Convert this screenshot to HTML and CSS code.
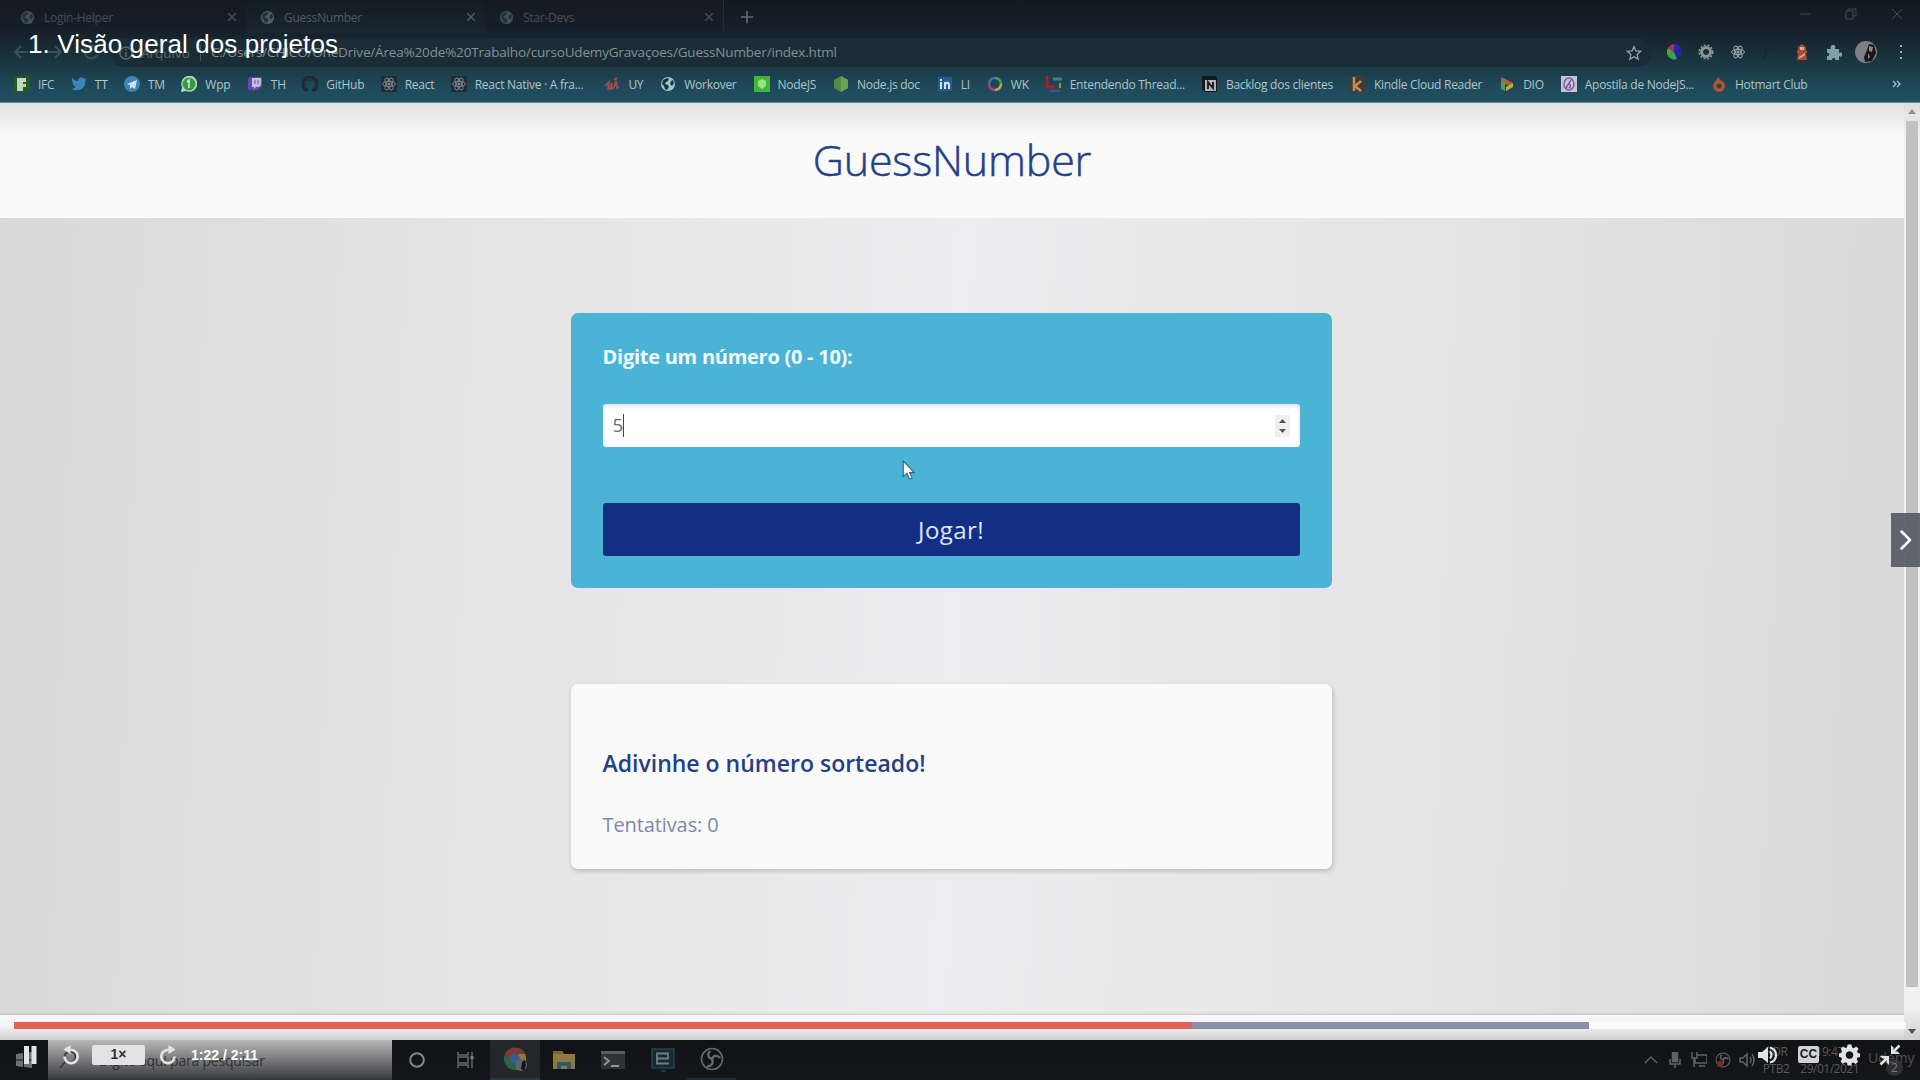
FILE: index.html
```html
<!DOCTYPE html>
<html lang="pt-BR">
<head>
<meta charset="utf-8">
<title>GuessNumber</title>
<link rel="stylesheet" href="styles.css">
</head>
<body>
<svg class="defs" aria-hidden="true">
  <symbol id="globe" viewBox="0 0 16 16"><circle cx="8" cy="8" r="7" fill="currentColor"/><path d="M3 4l4-2 2 1-1 2-2 1-1 2 3 1 1 2-2 3-2-1-1-3-2-2zM11 5l2-1 1 3-2 3-2-2z" fill="#18363f"/></symbol>
  <symbol id="atom" viewBox="0 0 16 16"><g fill="none" stroke="currentColor"><ellipse cx="8" cy="8" rx="6.5" ry="2.6"/><ellipse cx="8" cy="8" rx="6.5" ry="2.6" transform="rotate(60 8 8)"/><ellipse cx="8" cy="8" rx="6.5" ry="2.6" transform="rotate(120 8 8)"/></g><circle cx="8" cy="8" r="1.5" fill="currentColor"/></symbol>
  <symbol id="obs" viewBox="0 0 24 24"><g fill="none" stroke="currentColor" stroke-width="1.6"><circle cx="12" cy="12" r="10.5"/><path d="M12 12c-4-1-5-5-2-8M12 12c1-4 6-4 8-1M12 12c2 4-1 8-5 7" stroke-width="2.4"/></g></symbol>
</svg>
<div class="screen">
  <header class="browser">
    <div class="tabs">
      <div class="tab"><svg class="i16"><use href="#globe"/></svg><span class="tab-name">Login-Helper</span><svg class="x" viewBox="0 0 8 8"><path d="M0 0l8 8M8 0L0 8"/></svg></div>
      <div class="tab active"><svg class="i16"><use href="#globe"/></svg><span class="tab-name">GuessNumber</span><svg class="x" viewBox="0 0 8 8"><path d="M0 0l8 8M8 0L0 8"/></svg></div>
      <div class="tab"><svg class="i16"><use href="#globe"/></svg><span class="tab-name">Star-Devs</span><svg class="x" viewBox="0 0 8 8"><path d="M0 0l8 8M8 0L0 8"/></svg></div>
      <svg class="plus" viewBox="0 0 12 12"><path d="M6 0v12M0 6h12"/></svg>
      <div class="window-buttons">
        <svg viewBox="0 0 12 12"><path d="M1 6h10"/></svg>
        <svg viewBox="0 0 12 12"><path d="M1 3h7v8H1zM3 3V1h8v7H8"/></svg>
        <svg viewBox="0 0 12 12"><path d="M1 1l10 10M11 1L1 11"/></svg>
      </div>
    </div>
    <div class="toolbar">
      <svg class="nav" viewBox="0 0 84 16"><path d="M14 8H2M7 2L1 8l6 6M34 8h12M41 2l6 6-6 6M83 5a6.500 6.500 0 1 0 0 6"/></svg>
      <div class="omnibox">
        <svg class="i14" viewBox="0 0 14 14"><circle cx="7" cy="7" r="6" fill="none" stroke="currentColor" stroke-width="1.500"/><path d="M7 6v5M7 3v1.500" stroke="currentColor" stroke-width="1.500"/></svg>
        <span class="scheme">Arquivo</span><i></i>
        <span class="url">C:/Users/CHICO/OneDrive/Área%20de%20Trabalho/cursoUdemyGravaçoes/GuessNumber/index.html</span>
        <svg class="star" viewBox="0 0 16 16"><path d="M8 1.500l1.900 4.400 4.800.4-3.600 3.200 1.100 4.700L8 11.700l-4.200 2.500 1.100-4.700L1.300 6.300l4.800-.4z"/></svg>
      </div>
      <div class="extensions">
        <svg viewBox="0 0 16 16"><path d="M8 8V0a8 8 0 0 1 7 4z" fill="#3127a6"/><path d="M8 8l7-4a8 8 0 0 1-4 11z" fill="#2720a0"/><path d="M8 8l3 7a8 8 0 0 1-9-3z" fill="#38a44a"/><path d="M8 8l-6 4a8 8 0 0 1 0-8z" fill="#52a442"/><path d="M8 8L2 4a8 8 0 0 1 6-4z" fill="#a83548"/></svg>
        <svg viewBox="0 0 16 16"><circle cx="8" cy="8" r="4.500" fill="none" stroke="#8f9698" stroke-width="3"/><circle cx="8" cy="8" r="6.800" fill="none" stroke="#8f9698" stroke-width="1.500" stroke-dasharray="2 1.700"/></svg>
        <svg class="atom-ext"><use href="#atom"/></svg>
        <svg viewBox="0 0 16 16"><path d="M7 1c-3 0-2 3-3 7s-1 6-3 6M2 6h6M10 4c0-4 5-3 4 0-1 2-3 2-3 5M11 12v1" fill="none" stroke="#122a34" stroke-width="1.500"/></svg>
        <svg viewBox="0 0 16 16"><path d="M4 6V3l4-3 4 3v3l1 1v2h-1l1 7H3l1-7H3V7z" fill="#ab4c32"/><path d="M6 3h4v3H6zM5 13l6-4v2l-6 4z" fill="#c7b4a8"/></svg>
        <svg viewBox="0 0 16 16"><path d="M1 5h4c-1-3 0-4 2-4s3 1 2 4h4v4c3-1 3 0 3 2s-1 2-3 1v4H9c1-3-3-3-3 0H1v-4c3 1 3-4 0-3z" fill="#7da3a7"/></svg>
        <svg class="avatar" viewBox="0 0 22 22"><circle cx="11" cy="11" r="11" fill="#7c8085"/><path d="M12 9l2-6 5 1 2 8-4 8-7 1-1-5z" fill="#14171b"/><path d="M14 5l4 1-1 5-3-1zM13 12l2 4-2 2z" fill="#a3807a"/></svg>
        <svg class="kebab" viewBox="0 0 4 16"><path d="M1 1h2v2H1zM1 7h2v2H1zM1 13h2v2H1z"/></svg>
      </div>
    </div>
    <nav class="bookmarks">
      <a><svg viewBox="0 0 16 16"><path d="M0 0h16v16H0z" fill="#24591f"/><path d="M3 2h9v4H9v2h3v3H9v4H3z" fill="#c5d3c0"/></svg><span>IFC</span></a>
      <a><svg viewBox="0 0 16 16"><path d="M1 2c2 2 4 3 6 3 0-3 4-5 6-2l2-1-1 5c0 6-7 9-13 6l4-2C2 10 1 6 1 2z" fill="#3b86bd"/></svg><span>TT</span></a>
      <a><svg viewBox="0 0 16 16"><circle cx="8" cy="8" r="8" fill="#3b85b8"/><path d="M3 8l10-4-2 9-3-2-2 2V9z" fill="#d6e3e8"/></svg><span>TM</span></a>
      <a><svg viewBox="0 0 16 16"><path d="M0 16l1-5a8 8 0 1 1 4 4z" fill="#b8d5bd"/><circle cx="8" cy="8" r="6.500" fill="#349b49"/><path d="M6 6l2-2v8" stroke="#dce9e0" stroke-width="1.500" fill="none"/></svg><span>Wpp</span></a>
      <a><svg viewBox="0 0 16 16"><path d="M2 1h13v9l-4 4H8l-2 2v-2H1V4z" fill="#6447af"/><path d="M5 2h9v7l-2 2H9l-2 2v-2H5z" fill="#c6bddf"/><path d="M8 4v4M11 4v4" stroke="#6447af"/></svg><span>TH</span></a>
      <a><svg viewBox="0 0 16 16"><path d="M5.500 15v-3C2 11 2 6 3.500 5V2.500L6 4h4l2.500-1.500V5c1.500 1 1.500 6-2 7v3" fill="none" stroke="#202a32"/><path d="M5 15a7.300 7.300 0 1 1 6 0" fill="none" stroke="#202a32" stroke-width="2.600"/></svg><span>GitHub</span></a>
      <a><svg class="react"><use href="#atom"/></svg><span>React</span></a>
      <a class="wide"><svg class="react"><use href="#atom"/></svg><span>React Native · A fra...</span></a>
      <a><svg viewBox="0 0 16 16"><path d="M1 10l4-4-1 7c2 1 3-3 4-6l-1 6c3 0 4-4 5-8l1 7 2-1M10 4l3-2" fill="none" stroke="#a04b4e" stroke-width="1.800"/></svg><span>UY</span></a>
      <a><svg class="pale"><use href="#globe"/></svg><span>Workover</span></a>
      <a><svg viewBox="0 0 16 16"><path d="M0 0h16v16H0z" fill="#44b637"/><path d="M8 3l4 2v5l-4 3-4-3V5z" fill="#9be086"/></svg><span>NodeJS</span></a>
      <a><svg viewBox="0 0 16 16"><path d="M8 0l7 4v8l-7 4-7-4V4z" fill="#548948"/><path d="M8 0l7 4v8l-7 4z" fill="#6aa153"/></svg><span>Node.js doc</span></a>
      <a><svg viewBox="0 0 16 16"><path d="M1 1h14v14H1z" fill="#235f95"/><path d="M4 6v7M4 3v2M8 13V6M8 9c1-3 4-3 4 0v4" fill="none" stroke="#d4e1e9" stroke-width="2"/></svg><span>LI</span></a>
      <a><svg viewBox="0 0 16 16"><g fill="none" stroke-width="2.500"><path d="M8 2a6 6 0 0 1 6 6" stroke="#44a24e"/><path d="M14 8a6 6 0 0 1-6 6" stroke="#c1a24b"/><path d="M8 14a6 6 0 0 1-6-6" stroke="#a84262"/><path d="M2 8a6 6 0 0 1 6-6" stroke="#4a6dad"/></g></svg><span>WK</span></a>
      <a><svg viewBox="0 0 16 16"><path d="M1 0v11h8" fill="none" stroke="#a3252c" stroke-width="3"/><path d="M7 3h9" stroke="#3f8674" stroke-width="3"/><path d="M14 7v5" stroke="#90964a" stroke-width="2"/><path d="M4 15h10" stroke="#265c8c" stroke-width="2"/></svg><span>Entendendo Thread...</span></a>
      <a><svg viewBox="0 0 16 16"><path d="M0 0h13l2 2v14H3l-3-3z" fill="#15191c"/><path d="M3 4h11v11H3z" fill="#aeb4b7"/><path d="M6 13V6l5 6V6" fill="none" stroke="#15191c" stroke-width="1.800"/></svg><span>Backlog dos clientes</span></a>
      <a><svg viewBox="0 0 16 16"><path d="M0 0h16v16H0z" fill="#3b3d3d"/><path d="M4 1v14M11 5l-6 5 6 5" fill="none" stroke="#c48c4e" stroke-width="2.500"/></svg><span>Kindle Cloud Reader</span></a>
      <a><svg viewBox="0 0 16 16"><path d="M2 1l12 6-2 3-10-3z" fill="#ad633d"/><path d="M2 5l4 2v8l-4-2z" fill="#589851"/><path d="M14 7v4l-7 4V11z" fill="#c0ac3d"/></svg><span>DIO</span></a>
      <a><svg viewBox="0 0 16 16"><path d="M0 0h16v16H0z" fill="#c4c6d1"/><ellipse cx="8" cy="8" rx="5" ry="6" fill="none" stroke="#815aa9" stroke-width="1.500"/><path d="M5 12l5-8M8 12c2-1 2-3 0-4" stroke="#815aa9" stroke-width="1.500" fill="none"/></svg><span>Apostila de NodeJS...</span></a>
      <a><svg viewBox="0 0 16 16"><path d="M7 1l2 3c3 1 5 3 5 6a6 6 0 0 1-12 0c0-3 3-4 5-9z" fill="#b4512f"/><circle cx="8" cy="10" r="2.500" fill="#204452"/></svg><span>Hotmart Club</span></a>
      <svg class="more" viewBox="0 0 9 8"><path d="M1 1l3 3-3 3M5 1l3 3-3 3"/></svg>
    </nav>
  </header>
  <div class="viewport">
    <main class="page">
      <h1>GuessNumber</h1>
      <section class="content">
        <form class="guess">
          <label>Digite um número (0 - 10):</label>
          <div class="field"><span>5</span><svg viewBox="0 0 15 22"><path d="M4 8l3.500-4L11 8zM4 14l3.500 4 3.500-4z"/></svg></div>
          <div class="play">Jogar!</div>
        </form>
        <section class="result">
          <h2>Adivinhe o número sorteado!</h2>
          <p>Tentativas: 0</p>
        </section>
      </section>
      <footer></footer>
    </main>
    <aside class="scrollbar"><svg viewBox="0 0 16 17"><path d="M4 11l4-5 4 5z" fill="#929292"/></svg><b></b><svg viewBox="0 0 16 17"><path d="M4 6l4 5 4-5z" fill="#4d4d4d"/></svg></aside>
  </div>
  <footer class="taskbar">
    <div class="start"><svg viewBox="0 0 16 16"><path d="M0 2l7-1v6.500H0zM8 1l8-1v7.500H8zM0 8.500h7V15l-7-1zM8 8.500h8V16l-8-1z"/></svg></div>
    <div class="search"><svg viewBox="0 0 18 20"><circle cx="11" cy="7" r="5.500"/><path d="M7 11l-6 7"/></svg><span>Digite aqui para pesquisar</span></div>
    <div class="app"><svg viewBox="0 0 24 24"><circle cx="12" cy="12" r="6.800" fill="none" stroke="#85868a" stroke-width="2"/></svg></div>
    <div class="app"><svg viewBox="0 0 24 24"><path d="M4 4v3h10V4M4 20v-3h10v3M4 9h10v6H4zM18 4v16" fill="none" stroke="#66676a" stroke-width="1.500"/><path d="M16.500 8h3v3h-3z" fill="#808184"/></svg></div>
    <div class="app open"><svg viewBox="0 0 24 24"><circle cx="12" cy="12" r="11" fill="#276449"/><path d="M2 7a11 11 0 0 1 20 0H12L8 14z" fill="#7b3c35"/><path d="M22 7a11 11 0 0 1-9 16l4-10-2-6z" fill="#8f773b"/><circle cx="12" cy="12" r="5" fill="#355b9b"/><circle cx="18" cy="18" r="6" fill="#606267"/><path d="M19 15l3-2 1 5-2 6-3-2z" fill="#141518"/></svg></div>
    <div class="app"><svg viewBox="0 0 24 24"><path d="M1 3h9l2 3h11v15H1z" fill="#8c7a42"/><path d="M1 3h9l2 3H1z" fill="#83632d"/><path d="M5 21v-7h14v7h-4v-3H9v3z" fill="#35566a"/></svg></div>
    <div class="app"><svg viewBox="0 0 24 24"><path d="M0 3h24v18H0z" fill="#303236"/><path d="M0 3h24v3H0z" fill="#5c5e62"/><path d="M3 9l5 4-5 4M10 18h8" fill="none" stroke="#96979a" stroke-width="1.800"/></svg></div>
    <div class="app"><svg viewBox="0 0 24 24"><path d="M1 1h22v19H1zM10 23h5" fill="#172a34" stroke="#28424f" stroke-width="1.500"/><path d="M18 5.500H6v10h12M6 10.500h11v-5" fill="none" stroke="#68818b" stroke-width="1.800"/></svg></div>
    <div class="app running"><svg class="obs"><use href="#obs"/></svg></div>
    <div class="tray">
      <svg viewBox="0 0 16 16"><path d="M2 11l6-6 6 6" fill="none"/></svg>
      <svg viewBox="0 0 16 16"><path d="M5.500.5h5v9h-5z" fill="#606164"/><path d="M3 7v5h10V7M8 12v4" fill="none"/></svg>
      <svg viewBox="0 0 16 16"><path d="M6 3h10v8H4V7M8 14h6M1 0v6h5V0M3 6v9" fill="none"/></svg>
      <svg class="tray-obs" viewBox="0 0 16 16"><use href="#obs" width="16" height="16"/><circle cx="5" cy="12" r="3" fill="#7c2a22" stroke="none"/></svg>
      <svg viewBox="0 0 16 16"><path d="M1 6h3l4-4v12l-4-4H1zM11 5q2 3 0 6M13 2q4 6 0 12" fill="none"/></svg>
      <div class="lang"><span>POR</span><span>PTB2</span></div>
      <div class="clock"><span>19:47</span><span>29/01/2021</span></div>
      <div class="notice">2</div>
    </div>
  </footer>
  <div class="watermark">Udemy</div>
  <svg class="cursor" viewBox="0 0 12 19"><path d="M1 1v15l3.500-3.500L7 18l2.500-1-2.500-5h4.500z"/></svg>
  <div class="player-title">1. Visão geral dos projetos</div>
  <div class="next"><svg viewBox="0 0 12 20"><path d="M1.500 1.500L10 10l-8.500 8.500"/></svg></div>
  <div class="player">
    <div class="progress"><div class="played"></div><div class="buffered"></div></div>
    <div class="controls">
      <svg class="pause" viewBox="0 0 12.500 18"><path d="M0 0h5v18H0zM7.500 0h5v18h-5z"/></svg>
      <svg class="rewind" viewBox="0 0 18 20"><path d="M5 5h5a6.600 6.600 0 1 1-7.500 6.500" fill="none" stroke="currentColor" stroke-width="2.700"/><path d="M8.500 0v9L1.500 4.500z"/></svg>
      <div class="rate">1×</div>
      <svg class="forward" viewBox="0 0 18 20"><path d="M5 5h5a6.600 6.600 0 1 1-7.500 6.500" fill="none" stroke="currentColor" stroke-width="2.700"/><path d="M8.500 0v9L1.500 4.500z"/></svg>
      <div class="time">1:22 / 2:11</div>
      <svg class="volume" viewBox="0 0 20 18"><path d="M0 6h4l6-5v16l-6-5H0z"/><path d="M12 5.500q3 3.500 0 7M12 1.500c8 2 8 13 0 15" fill="none" stroke="currentColor" stroke-width="2.200"/></svg>
      <div class="cc">CC</div>
      <svg class="gear" viewBox="0 0 22 22"><path fill-rule="evenodd" d="M9 0h4l.6 3 1.900.8L18 2l2.500 2.500-1.600 2.600.8 1.900 2.300.5v3.500l-2.600.6-.8 1.900L20 18l-2.500 2.300-2.500-1.500-1.800.8L13 22H9l-.6-2.600-1.900-.8L4 20.200l-2.400-2.500 1.500-2.400-.7-1.800-2.400-.6V9.400l2.500-.6.8-1.900L1.800 4.400 4.300 2l2.400 1.600 1.800-.8zM11 7a4 4 0 1 0 .01 0z"/></svg>
      <svg class="shrink" viewBox="0 0 22 22"><path d="M20.500 1.500L14 8M1.500 20.500L8 14" fill="none" stroke="currentColor" stroke-width="2.500"/><path d="M12 1v9h9l-2.500-2.500h-2.800l-1.200-1.200V3.500zM1 12h9v9l-2.500-2.500v-2.800l-1.200-1.200H3.500z"/></svg>
    </div>
  </div>
</div>
</body>
</html>
```
FILE: styles.css
```css
* { box-sizing: border-box; }
body { margin: 0; font-family: "Open Sans", "Noto Sans", sans-serif; }
h1, h2, p { margin: 0; }
svg { display: block; flex: none; }
.defs { position: absolute; width: 0; height: 0; }
.screen { position: relative; width: 1920px; height: 1080px; overflow: hidden; display: flex; flex-direction: column; background: #eee; }

.browser { height: 103px; flex: none; display: flex; flex-direction: column; color: #9fb5b9; background: linear-gradient(#14181e, #16222b 34px, #1b3844 65px, #1f4b5c 90px, #1f4f61); border-bottom: 1px solid #6f8991; }
.tabs { height: 34px; display: flex; align-items: center; color: #474e53; font-size: 12px; letter-spacing: -0.25px; }
.tab { width: 239px; height: 34px; display: flex; align-items: center; padding: 0 1px 0 20px; gap: 9px; }
.tab:first-child { width: 246px; }
.tab.active { background: linear-gradient(#151b22, #18262e); border-radius: 8px 8px 0 0; color: #535a5f; }
.tab:not(.active) { background: linear-gradient(#151920, #16212a); }
.tab.active { padding-left: 14px; }
.tab:nth-child(3) { padding-left: 14px; border-right: 1px solid #252d34; }
.tab-name { flex: 1; white-space: nowrap; }
.i16 { width: 15px; height: 15px; }
.x { width: 8px; height: 8px; margin-right: 9px; stroke: currentColor; stroke-width: 1.4; }
.plus { width: 12px; height: 12px; margin-left: 17px; stroke: #666c70; stroke-width: 1.6; }
.window-buttons { margin-left: auto; display: flex; gap: 34px; padding: 0 17px 6px 0; }
.window-buttons svg { width: 12px; height: 12px; fill: none; stroke: #42494e; }
.toolbar { height: 36px; display: flex; align-items: center; padding: 0 17px 0 14px; }
.nav { width: 84px; height: 16px; margin-right: 12px; fill: none; stroke: #36545d; stroke-width: 2; }
.omnibox { width: 1542px; height: 28px; margin-top: 2px; display: flex; align-items: center; padding: 0 10px 0 9px; border-radius: 14px; background: #1a2d37; color: #85918f; font-size: 13.5px; white-space: nowrap; }
.i14 { width: 14px; height: 14px; margin-right: 8px; }
.omnibox > .i14, .scheme { opacity: .6; }
.omnibox i { width: 1px; height: 16px; background: #47565d; margin: 0 10px; }
.url { margin-top: -2px; letter-spacing: -0.17px; }
.star { width: 16px; height: 16px; margin-left: auto; fill: none; stroke: #98a5a9; stroke-width: 1.2; }
.extensions { flex: 1; display: flex; align-items: center; margin-left: 14px; gap: 16px; }
.extensions svg { width: 16px; height: 16px; }
.extensions .atom-ext { color: #99a6aa; }
.extensions .avatar { width: 22px; height: 22px; margin-left: -3px; }
.extensions .kebab { width: 4px; margin-left: auto; fill: #89adb1; }
.bookmarks { height: 32px; display: flex; align-items: center; padding: 0 19px 4px 14px; gap: 17px; color: #aec5ca; font-size: 12px; letter-spacing: -0.27px; white-space: nowrap; }
.bookmarks a { display: flex; align-items: center; gap: 8px; }
.bookmarks a:nth-child(-n+7) { margin-right: -0.5px; }
.bookmarks .wide { margin-right: 4px; }
.bookmarks a svg { width: 16px; height: 16px; }
.bookmarks .react { background: #202a33; color: #77878f; border-radius: 2px; }
.bookmarks .pale { color: #9fc6cb; }
.bookmarks .more { width: 9px; height: 8px; margin-left: auto; fill: none; stroke: #9fc5cb; stroke-width: 1.3; }

.viewport { height: 937px; display: flex; background: #f1f1f1; }
.page { width: 1904px; display: flex; flex-direction: column; background: linear-gradient(92deg, #d9d9d9, #e4e4e5 25%, #ededef 50%, #e4e4e5 75%, #d9d9d9); }
.page h1 { height: 115px; display: flex; align-items: center; justify-content: center; padding-bottom: 2px; color: #244086; background: linear-gradient(#e2e2e3, #fafafb 34px); font-size: 43px; font-weight: 300; line-height: 1; letter-spacing: -0.2px; -webkit-text-stroke: 0.5px #244086; }
.content { flex: 1; display: flex; flex-direction: column; align-items: center; padding: 95px 2px 0 0; gap: 96px; }
.guess { width: 761px; height: 275px; padding: 30px 32px 32px; border-radius: 7px; background: #4bb4d6; display: flex; flex-direction: column; }
.guess label { height: 28px; line-height: 28px; font-size: 20px; font-weight: 700; letter-spacing: -0.26px; color: #eefcff; }
.field { height: 43px; margin-top: 33px; padding: 0 10px; background: #fff; border-radius: 3px; box-shadow: inset 0 2px 4px #0002; display: flex; align-items: center; justify-content: space-between; font-size: 19px; color: #6d6d70; }
.field span { height: 23px; line-height: 23px; border-right: 1px solid #444; }
.field svg { width: 15px; height: 22px; background: #efefef; fill: #555; }
.play { height: 53px; margin-top: 56px; border-radius: 3px; background: #132f84; color: #dce5fa; display: flex; align-items: center; justify-content: center; padding-bottom: 1px; font-size: 24px; font-weight: 500; letter-spacing: 0.4px; }
.result { width: 761px; height: 185px; padding: 61px 32px 0; border-radius: 7px; background: #fafafb; box-shadow: 1px 2px 5px #0003; color: #244086; }
.result h2 { font-size: 23px; line-height: 36px; font-weight: 600; }
.result p { margin-top: 27px; font-size: 20px; line-height: 34px; letter-spacing: -0.1px; color: #7b89aa; }
.page > footer { height: 25px; background: linear-gradient(#f8f8f8, #f5f5f5 10px, #cfcfcf); box-shadow: 0 0 3px #0004; }
.scrollbar { width: 16px; display: flex; flex-direction: column; justify-content: space-between; background: linear-gradient(#dedede, #f1f1f1 34px, #f1f1f1 905px, #cfcfcf); }
.scrollbar svg { width: 16px; height: 17px; }
.scrollbar b { width: 12px; height: 866px; margin: 0 auto 36px 2px; background: #c1c1c1; }

.taskbar { height: 40px; display: flex; background: linear-gradient(#111214, #15161a); color: #58595c; }
.start { width: 48px; padding: 12px 0 0 16px; }
.start svg { width: 16px; height: 16px; fill: #6e6f71; }
.search { width: 344px; display: flex; align-items: center; gap: 22px; padding-left: 11px; background: linear-gradient(#b8b8b9, #37383d); color: #2f3034; font-size: 14px; letter-spacing: -0.2px; white-space: nowrap; }
.search svg { width: 18px; height: 20px; fill: none; stroke: #38393c; stroke-width: 1.8; }
.app { width: 49.2px; display: flex; align-items: center; justify-content: center; }
.app svg { width: 24px; height: 24px; }
.app.open { background: #242629; border-bottom: 2px solid #263744; }
.app.running { border-bottom: 2px solid #1d2d38; }
.app .obs { color: #66676a; }
.tray { margin-left: auto; display: flex; align-items: center; gap: 8px; padding-right: 17px; font-size: 12px; line-height: 17px; white-space: nowrap; }
.tray svg { width: 16px; height: 16px; stroke: #606164; stroke-width: 1.5; }
.tray .tray-obs { color: #606164; }
.lang, .clock { display: flex; flex-direction: column; align-items: center; letter-spacing: -0.5px; }
.clock { padding: 0 3px; }
.notice { width: 17px; height: 17px; margin: 14px 0 0 16px; border-radius: 50%; background: #2e2f32; text-align: center; color: #77787b; }

/* Layers that float above the recording */
.watermark { position: absolute; left: 1868px; top: 1048px; font-size: 14px; line-height: 20px; color: #505155; }
.cursor { position: absolute; left: 902px; top: 460px; width: 13px; height: 20px; fill: #fff; stroke: #34606f; stroke-width: 1; }
.player-title { position: absolute; left: 28px; top: 29px; font: 26px/30px "Liberation Sans", Arial, sans-serif; letter-spacing: 0.1px; color: #fff; white-space: nowrap; }
.next { position: absolute; right: 0; top: 513px; width: 29px; height: 54px; display: flex; align-items: center; justify-content: center; background: #585d66f0; }
.next svg { width: 12px; height: 20px; fill: none; stroke: #fff; stroke-width: 2.5; stroke-linecap: round; stroke-linejoin: round; }
.player { position: absolute; left: 0; top: 1022px; width: 1920px; height: 58px; font-family: "Liberation Sans", Arial, sans-serif; color: #e2e3e4; }
.progress { height: 7px; margin: 0 14px; display: flex; background: #fbfbfb; }
.played { width: 1178px; background: #df6254; }
.buffered { width: 397px; background: #8b8fa6; }
.controls { height: 51px; display: flex; align-items: center; padding: 0 19px 0 24px; }
.controls svg { fill: currentColor; }
.pause { width: 12.5px; height: 18px; }
.rewind { width: 18px; height: 20px; margin-left: 25.5px; }
.rate { width: 53px; height: 20px; margin-left: 12px; border-radius: 2px; background: #e2e3e5; color: #2d2f31; text-align: center; font-weight: 700; font-size: 14px; line-height: 19px; }
.forward { width: 18px; height: 20px; margin-left: 14px; transform: scaleX(-1); }
.time { margin-left: 14px; font-size: 14px; font-weight: 700; color: #fff; }
.volume { width: 20px; height: 18px; margin-left: auto; }
.cc { width: 21px; height: 17px; margin-left: 20px; border-radius: 2px; background: #d1d2d3; color: #1b1c1e; font-size: 12px; font-weight: 700; line-height: 17px; text-align: center; }
.gear { width: 21px; height: 22px; margin-left: 20px; }
.shrink { width: 22px; height: 22px; margin-left: 19px; }
```
